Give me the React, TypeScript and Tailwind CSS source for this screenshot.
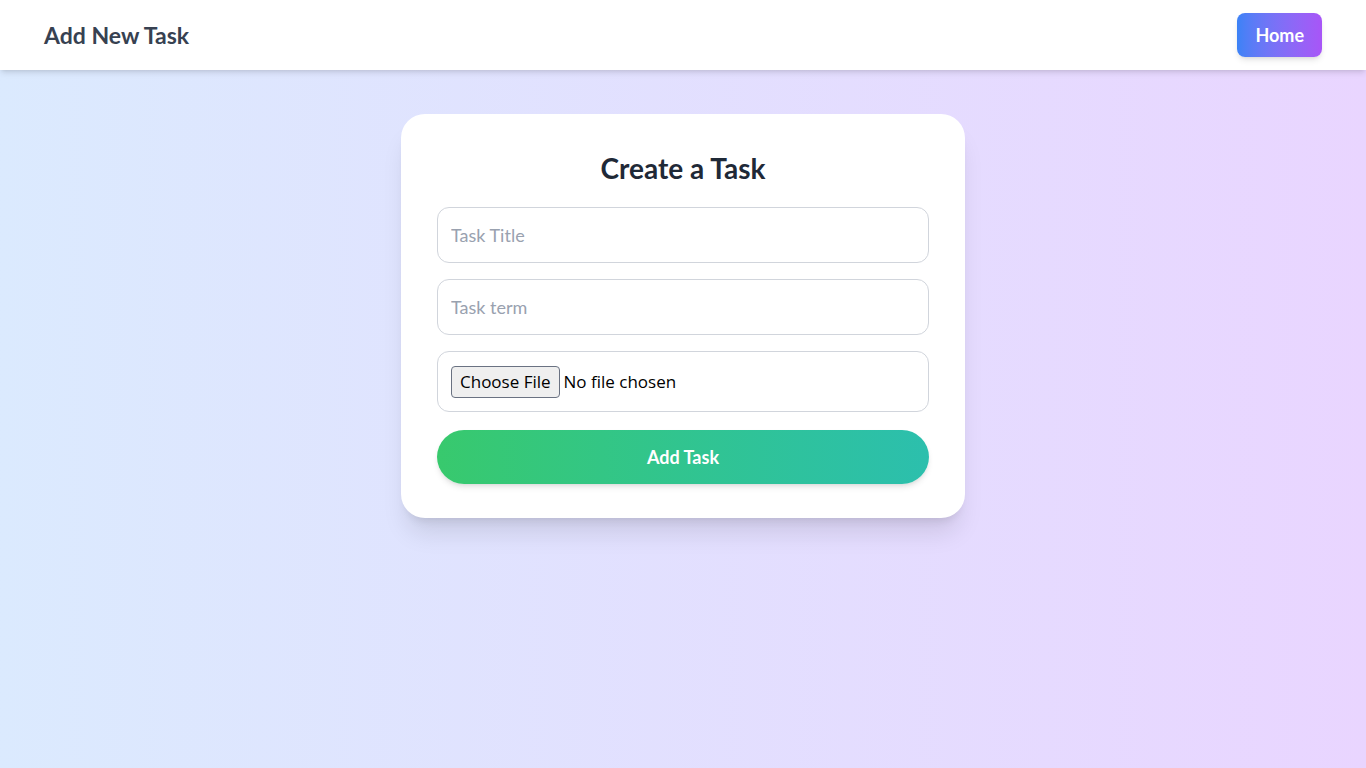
export default function App() {
  return (
    <div className="min-h-screen bg-gradient-to-r from-[#dbeafe] to-[#e9d5ff] font-['Lato',sans-serif]">
      <header className="h-[70px] bg-white shadow-md flex items-center justify-between px-11">
        <h1 className="text-[23px] font-bold text-[#374151]">Add New Task</h1>
        <button className="h-11 px-[18px] rounded-lg bg-gradient-to-r from-[#3b82f6] to-[#a855f7] text-white text-lg font-bold shadow-md">
          Home
        </button>
      </header>

      <main className="flex justify-center pt-11">
        <div className="w-[564px] bg-white rounded-3xl shadow-xl px-9 pt-[38px] pb-[34px]">
          <h2 className="text-[28px] leading-8 font-bold text-[#1f2937] text-center mb-[23px]">Create a Task</h2>
          <form className="flex flex-col">
            <input
              type="text"
              placeholder="Task Title"
              className="h-14 w-full border border-gray-300 rounded-xl px-[13px] text-lg placeholder:text-gray-400 outline-none"
            />
            <input
              type="text"
              placeholder="Task term"
              className="h-14 w-full mt-4 border border-gray-300 rounded-xl px-[13px] text-lg placeholder:text-gray-400 outline-none"
            />
            <div className="h-[61px] mt-4 border border-gray-300 rounded-xl px-[13px] flex items-center">
              <input type="file" className="text-[17px] leading-[26px] text-black font-['Open_Sans',sans-serif] file:px-2 file:py-0.5 file:mr-1 file:border file:border-gray-500 file:bg-[#efefef] file:rounded-sm" />
            </div>
            <button
              type="button"
              className="h-[54px] mt-[18px] w-full rounded-full bg-gradient-to-r from-[#38c96d] to-[#2cbfad] text-white text-lg font-bold shadow-md"
            >
              Add Task
            </button>
          </form>
        </div>
      </main>
    </div>
  );
}
